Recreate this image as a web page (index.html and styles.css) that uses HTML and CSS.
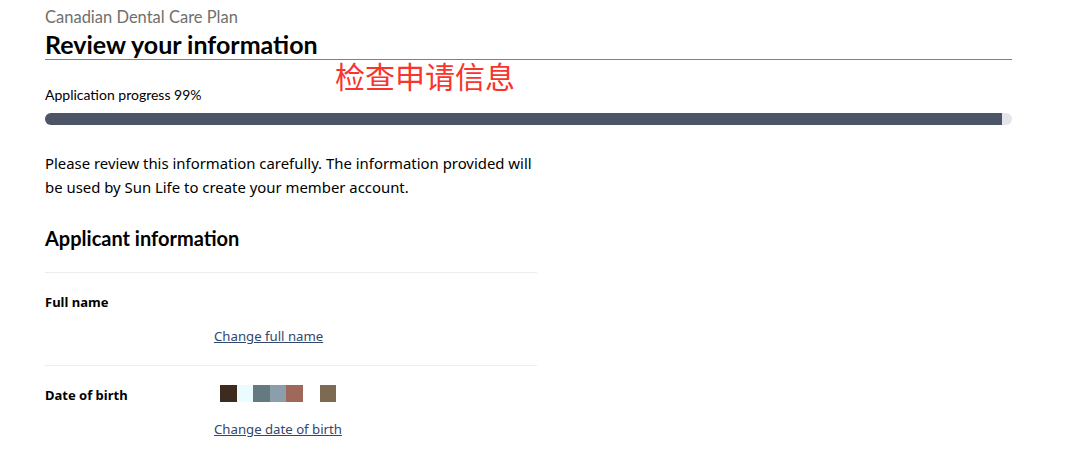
FILE: index.html
```html
<!DOCTYPE html>
<html lang="en">
<head>
  <meta charset="UTF-8">
  <meta name="viewport" content="width=device-width, initial-scale=1.0">
  <title>Review your information - Canadian Dental Care Plan</title>
  <link rel="stylesheet" href="styles.css">
</head>
<body>
  <main class="pagina">
    <p class="subtitulo">Canadian Dental Care Plan</p>
    <h1>Review your information</h1>

    <!-- Nota en rojo encima de la captura -->
    <span class="nota">检查申请信息</span>

    <p class="progreso-texto">Application progress 99%</p>
    <div class="barra">
      <div class="barra-relleno"></div>
    </div>

    <p class="intro">Please review this information carefully. The information provided will be used by Sun Life to create your member account.</p>

    <h2>Applicant information</h2>

    <dl class="datos">
      <div class="fila">
        <dt>Full name</dt>
        <dd>
          <div class="valor"></div>
          <a href="#" class="cambiar">Change full name</a>
        </dd>
      </div>
      <div class="fila">
        <dt>Date of birth</dt>
        <dd>
          <div class="valor oculto">
            <span class="px px-1"></span>
            <span class="px px-2"></span>
            <span class="px px-3"></span>
            <span class="px px-4"></span>
            <span class="px px-5"></span>
            <span class="px px-vacio"></span>
            <span class="px px-6"></span>
          </div>
          <a href="#" class="cambiar">Change date of birth</a>
        </dd>
      </div>
    </dl>
  </main>
</body>
</html>
```

FILE: styles.css
```css
body {
  margin: 0;
  padding: 0;
  background-color: #ffffff;
  color: #000000;
  font-family: "Noto Sans", Arial, sans-serif;
}

.pagina {
  position: relative;
  width: 967px;
  padding: 8px 0 0 45px;
}

.subtitulo {
  margin: 0;
  font-family: Lato, sans-serif;
  font-size: 16.5px;
  line-height: 19px;
  color: #6f6f6f;
}

h1 {
  margin: 2px 0 0;
  font-family: Lato, sans-serif;
  font-size: 25px;
  font-weight: 700;
  line-height: 30px;
  color: #000;
  border-bottom: 1px solid #c2646b;
}

.nota {
  position: absolute;
  left: 335px;
  top: 60px;
  font-family: "Noto Sans CJK SC", sans-serif;
  font-size: 30px;
  line-height: 30px;
  color: #f7352e;
}

.progreso-texto {
  margin: 26px 0 0;
  font-family: Lato, sans-serif;
  font-size: 14px;
  line-height: 17px;
}

.barra {
  margin-top: 10px;
  height: 12px;
  border-radius: 6px;
  background-color: #e4e5ea;
  overflow: hidden;
}

.barra-relleno {
  width: 99%;
  height: 100%;
  background-color: #4b5566;
}

.intro {
  margin: 26px 0 0;
  width: 500px;
  font-size: 14.9px;
  line-height: 24px;
}

h2 {
  margin: 27px 0 0;
  font-family: Lato, sans-serif;
  font-size: 20px;
  font-weight: 700;
  line-height: 24px;
}

.datos {
  margin: 22px 0 0;
  width: 492px;
}

.fila {
  display: grid;
  grid-template-columns: 169px 1fr;
  padding: 19px 0;
  border-top: 1px solid #ececec;
}

dt {
  font-size: 13px;
  font-weight: 700;
  line-height: 20px;
}

dd {
  margin: 0;
}

.valor {
  height: 20px;
}

.oculto {
  display: flex;
  padding-left: 6px;
}

.px {
  display: block;
  width: 17px;
  height: 17px;
}

.px-2, .px-4, .px-6 {
  width: 16px;
}

.px-1 { background-color: #3f2b1d; }
.px-2 { background-color: #eafcfe; }
.px-3 { background-color: #627a80; }
.px-4 { background-color: #8a9eab; }
.px-5 { background-color: #a0685a; }
.px-6 { background-color: #7d6a52; }

.cambiar {
  display: block;
  margin-top: 14px;
  font-size: 13.2px;
  line-height: 20px;
  color: #33466b;
  width: max-content;
}
```
